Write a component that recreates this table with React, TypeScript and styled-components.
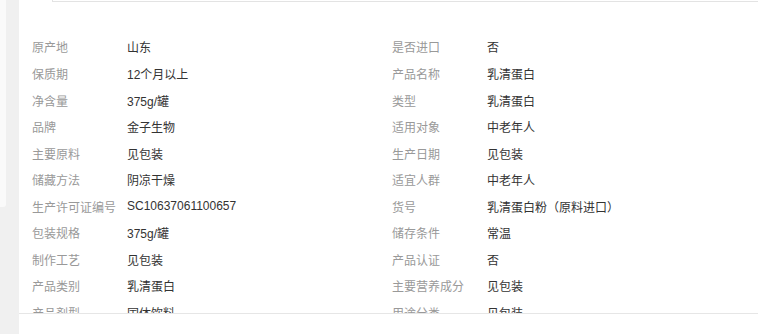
import styled, { createGlobalStyle } from "styled-components";

const GlobalStyle = createGlobalStyle`
  html, body {
    margin: 0;
    padding: 0;
    background: #fff;
  }
  body {
    font-family: "Liberation Sans", "Noto Sans CJK SC", sans-serif;
    font-size: 12px;
  }
`;

const Page = styled.div`
  display: flex;
  width: 758px;
  height: 334px;
  overflow: hidden;
`;

const Sidebar = styled.div`
  flex: 0 0 19px;
  background: #f0f0f0;
`;

const SideCard = styled.div`
  width: 6px;
  height: 207px;
  background: #fafafa;
  border-bottom-right-radius: 3px;
`;

const Main = styled.div`
  flex: 1;
  display: flex;
  flex-direction: column;
  background: #fff;
`;

const TopBox = styled.div`
  margin-left: 33px;
  height: 2px;
  box-sizing: border-box;
  border-left: 1px solid #e3e3e3;
  border-bottom: 1px solid #e3e3e3;
`;

const SpecArea = styled.div`
  height: 312px;
  box-sizing: border-box;
  padding: 31.7px 0 0 13px;
  overflow: hidden;
  border-bottom: 1px solid #e6e6e6;
`;

const SpecGrid = styled.div`
  display: grid;
  grid-template-columns: 360px 360px;
`;

const SpecRow = styled.div`
  display: flex;
  align-items: center;
  height: 26.56px;
  white-space: nowrap;
`;

const Label = styled.span`
  flex: 0 0 95px;
  color: #999;
`;

const Value = styled.span`
  color: #333;
`;

const specs: [string, string][] = [
  ["原产地", "山东"],
  ["是否进口", "否"],
  ["保质期", "12个月以上"],
  ["产品名称", "乳清蛋白"],
  ["净含量", "375g/罐"],
  ["类型", "乳清蛋白"],
  ["品牌", "金子生物"],
  ["适用对象", "中老年人"],
  ["主要原料", "见包装"],
  ["生产日期", "见包装"],
  ["储藏方法", "阴凉干燥"],
  ["适宜人群", "中老年人"],
  ["生产许可证编号", "SC10637061100657"],
  ["货号", "乳清蛋白粉（原料进口）"],
  ["包装规格", "375g/罐"],
  ["储存条件", "常温"],
  ["制作工艺", "见包装"],
  ["产品认证", "否"],
  ["产品类别", "乳清蛋白"],
  ["主要营养成分", "见包装"],
  ["产品剂型", "固体饮料"],
  ["用途分类", "见包装"],
];

export default function App() {
  return (
    <Page>
      <GlobalStyle />
      <Sidebar>
        <SideCard />
      </Sidebar>
      <Main>
        <TopBox />
        <SpecArea>
          <SpecGrid>
            {specs.map(([label, value]) => (
              <SpecRow key={label}>
                <Label>{label}</Label>
                <Value>{value}</Value>
              </SpecRow>
            ))}
          </SpecGrid>
        </SpecArea>
      </Main>
    </Page>
  );
}
